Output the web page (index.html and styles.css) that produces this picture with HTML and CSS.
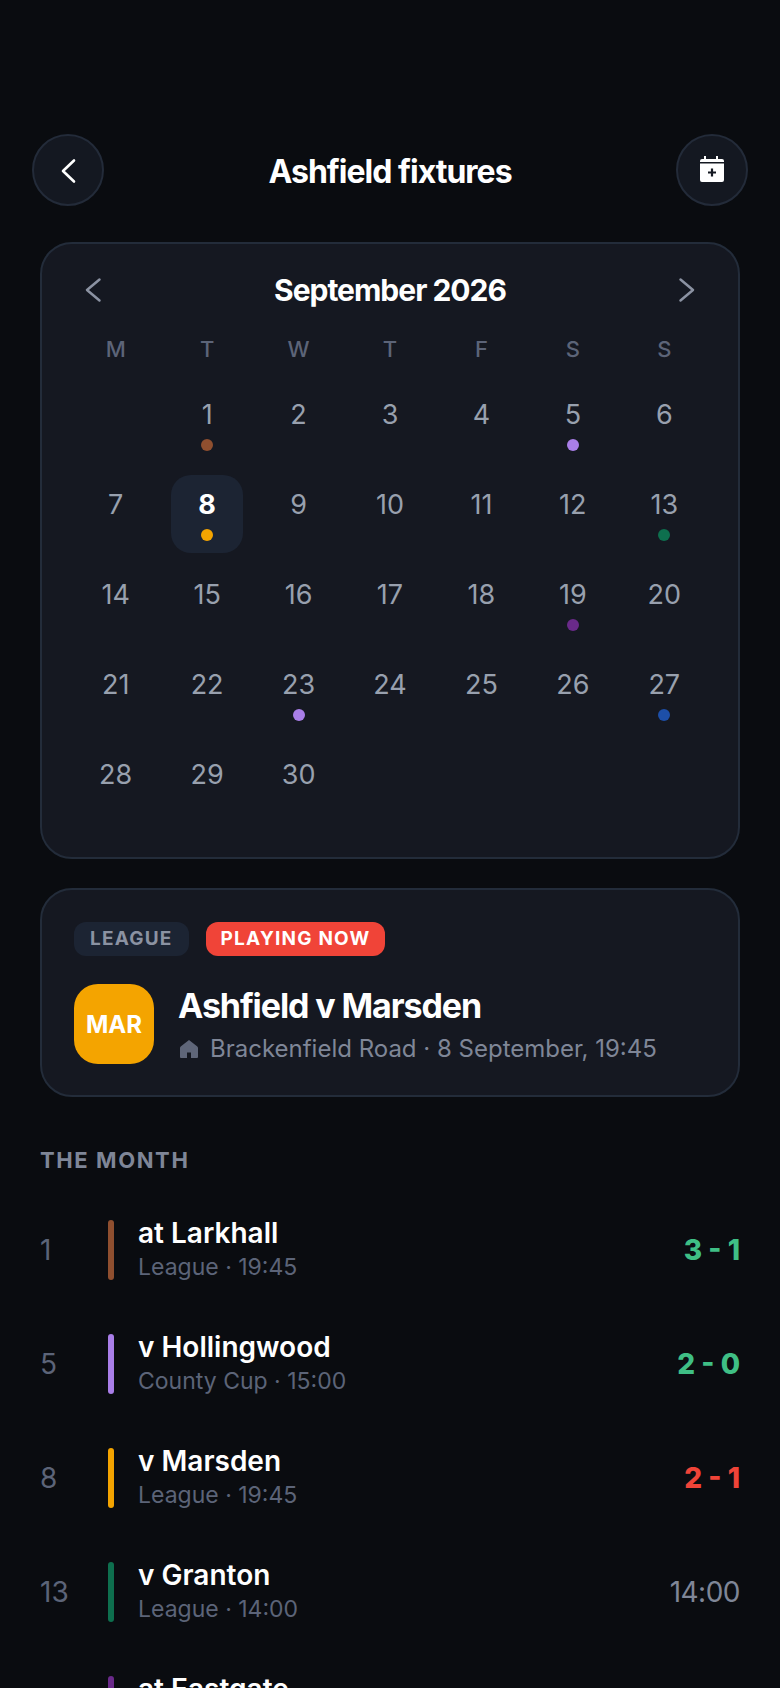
FILE: index.html
```html
<!DOCTYPE html>
<html>
	<head>
		<meta charset="UTF-8">
		<title>Ashfield fixtures</title>
		<link rel="stylesheet" href="styles.css">
	</head>
	<body>
		<div class="page">
			<div class="topbar">
				<div class="round-btn">
					<svg width="36" height="36" viewBox="0 0 36 36"><path d="M24 8.5 L13 19 L24 29.5" fill="none" stroke="#fff" stroke-width="2.6" stroke-linecap="round" stroke-linejoin="round"/></svg>
				</div>
				<h1>Ashfield fixtures</h1>
				<div class="round-btn">
					<svg width="28" height="28" viewBox="0 0 28 28">
						<path fill="#fff" d="M6 0h2v3h10V0h2v3h4a2 2 0 0 1 2 2v19a2 2 0 0 1-2 2H4a2 2 0 0 1-2-2V5a2 2 0 0 1 2-2h2z"/>
						<path fill="none" stroke="#141821" stroke-width="1.5" d="M2 6.75h24"/>
						<path fill="none" stroke="#141821" stroke-width="2.2" d="M10 16.5h8M14 12.5v8"/>
					</svg>
				</div>
			</div>

			<div class="card calendar">
				<div class="cal-head">
					<svg width="28" height="28" viewBox="0 0 28 28"><path d="M21.5 3.5 L9 14 L21.5 24.5" class="nav"/></svg>
					<span>September 2026</span>
					<svg width="28" height="28" viewBox="0 0 28 28"><path d="M6.5 3.5 L19 14 L6.5 24.5" class="nav"/></svg>
				</div>
				<div class="weekdays">
					<span>M</span><span>T</span><span>W</span><span>T</span><span>F</span><span>S</span><span>S</span>
				</div>
				<div class="days">
					<div class="day"></div>
					<div class="day">1<i class="dot brown"></i></div>
					<div class="day">2</div>
					<div class="day">3</div>
					<div class="day">4</div>
					<div class="day">5<i class="dot lilac"></i></div>
					<div class="day">6</div>
					<div class="day">7</div>
					<div class="day today">8<i class="dot amber"></i></div>
					<div class="day">9</div>
					<div class="day">10</div>
					<div class="day">11</div>
					<div class="day">12</div>
					<div class="day">13<i class="dot green"></i></div>
					<div class="day">14</div>
					<div class="day">15</div>
					<div class="day">16</div>
					<div class="day">17</div>
					<div class="day">18</div>
					<div class="day">19<i class="dot purple"></i></div>
					<div class="day">20</div>
					<div class="day">21</div>
					<div class="day">22</div>
					<div class="day">23<i class="dot lilac"></i></div>
					<div class="day">24</div>
					<div class="day">25</div>
					<div class="day">26</div>
					<div class="day">27<i class="dot blue"></i></div>
					<div class="day">28</div>
					<div class="day">29</div>
					<div class="day">30</div>
				</div>
			</div>

			<div class="card match">
				<div class="badges">
					<span class="badge">LEAGUE</span>
					<span class="badge live">PLAYING NOW</span>
				</div>
				<div class="match-info">
					<div class="crest">MAR</div>
					<div>
						<div class="match-title">Ashfield v Marsden</div>
						<div class="match-sub">
							<svg width="22" height="22" viewBox="0 0 22 22"><path fill="#5f6679" d="M11 2 L19.3 8.5 Q20 9 20 10 V19 Q20 20 19 20 H13 V14.5 H9 V20 H3 Q2 20 2 19 V10 Q2 9 2.7 8.5 Z"/></svg>
							Brackenfield Road · 8 September, 19:45
						</div>
					</div>
				</div>
			</div>

			<div class="section-label">THE MONTH</div>

			<div class="fixtures">
				<div class="fixture">
					<span class="num">1</span>
					<i class="bar brown"></i>
					<div class="info"><div class="name">at Larkhall</div><div class="sub">League · 19:45</div></div>
					<span class="score win">3 - 1</span>
				</div>
				<div class="fixture">
					<span class="num">5</span>
					<i class="bar lilac"></i>
					<div class="info"><div class="name">v Hollingwood</div><div class="sub">County Cup · 15:00</div></div>
					<span class="score win">2 - 0</span>
				</div>
				<div class="fixture">
					<span class="num">8</span>
					<i class="bar amber"></i>
					<div class="info"><div class="name">v Marsden</div><div class="sub">League · 19:45</div></div>
					<span class="score loss">2 - 1</span>
				</div>
				<div class="fixture">
					<span class="num">13</span>
					<i class="bar green"></i>
					<div class="info"><div class="name">v Granton</div><div class="sub">League · 14:00</div></div>
					<span class="time">14:00</span>
				</div>
				<!-- last row runs off the bottom of the screen -->
				<div class="fixture">
					<span class="num"></span>
					<i class="bar purple"></i>
					<div class="info"><div class="name">at Eastgate</div><div class="sub"></div></div>
				</div>
			</div>
		</div>
	</body>
</html>
```
FILE: styles.css
```css
*{
	margin: 0;
	padding: 0;
	box-sizing: border-box;
}
html, body{
	height: 1688px;
	overflow: hidden;
}
body{
	background: #0a0c10;
	color: #fff;
	font-family: Inter, "Liberation Sans", sans-serif;
}
.page{
	padding: 134px 40px 0;
}
.topbar{
	display: flex;
	align-items: center;
	justify-content: space-between;
	margin: 0 -8px 36px;
}
.topbar h1{
	font-size: 32px;
	font-weight: 700;
	letter-spacing: -1px;
	padding-top: 2px;
}
.round-btn{
	width: 72px;
	height: 72px;
	border-radius: 50%;
	background: #141821;
	border: 2px solid #232b39;
	display: flex;
	align-items: center;
	justify-content: center;
}
.card{
	background: #151821;
	border: 2px solid #232c3a;
	border-radius: 32px;
}
.calendar{
	height: 617px;
	padding: 0 28px;
	margin-bottom: 29px;
}
.cal-head{
	height: 90px;
	padding: 2px 8px 0;
	display: flex;
	align-items: center;
	justify-content: space-between;
	font-size: 30px;
	font-weight: 700;
	letter-spacing: -1px;
}
.nav{
	fill: none;
	stroke: #8b92a2;
	stroke-width: 2.5;
	stroke-linecap: round;
	stroke-linejoin: round;
}
.weekdays, .days{
	display: grid;
	grid-template-columns: repeat(7, 1fr);
}
.weekdays{
	height: 30px;
	margin-bottom: 21px;
	align-items: center;
	justify-items: center;
	color: #5c6478;
	font-size: 22px;
	font-weight: 500;
}
.days{
	grid-auto-rows: 78px;
	row-gap: 12px;
	justify-items: center;
}
.day{
	position: relative;
	width: 72px;
	height: 78px;
	border-radius: 20px;
	padding-top: 14px;
	text-align: center;
	font-size: 27px;
	line-height: 32px;
	color: #98a0ae;
}
.today{
	background: #1c2433;
	color: #fff;
	font-weight: 700;
}
.dot{
	position: absolute;
	left: 30px;
	top: 54px;
	width: 12px;
	height: 12px;
	border-radius: 50%;
}
.brown{ background: #8f4f2f; }
.lilac{ background: #a97ee8; }
.amber{ background: #f4a400; }
.green{ background: #0e6f4e; }
.purple{ background: #6a2a8a; }
.blue{ background: #1d4fa8; }
.match{
	height: 209px;
	padding: 32px;
	margin-bottom: 50px;
}
.badges{
	display: flex;
	gap: 17px;
	margin-bottom: 28px;
}
.badge{
	height: 34px;
	line-height: 34px;
	padding: 0 16px;
	border-radius: 12px;
	background: #1c2433;
	color: #8b92a2;
	font-size: 19px;
	font-weight: 700;
	letter-spacing: 1.2px;
}
.live{
	padding: 0 15px;
	background: #f04438;
	color: #fff;
}
.match-info{
	display: flex;
	align-items: center;
	gap: 24px;
}
.crest{
	width: 80px;
	height: 80px;
	border-radius: 24px;
	background: #f4a400;
	display: flex;
	align-items: center;
	justify-content: center;
	font-size: 24px;
	font-weight: 700;
}
.match-title{
	font-size: 34px;
	font-weight: 700;
	letter-spacing: -1.1px;
	margin-bottom: 8px;
}
.match-sub{
	display: flex;
	align-items: center;
	gap: 10px;
	font-size: 24px;
	color: #7f8697;
}
.section-label{
	font-size: 22px;
	font-weight: 700;
	letter-spacing: 1.6px;
	color: #7f8697;
	margin-bottom: 47px;
}
.fixture{
	display: flex;
	align-items: center;
	height: 60px;
	margin-bottom: 54px;
}
.num{
	width: 68px;
	font-size: 28px;
	color: #5c6478;
}
.bar{
	width: 6px;
	height: 60px;
	border-radius: 3px;
	margin-right: 24px;
}
.info{
	flex: 1;
}
.name{
	font-size: 28px;
	font-weight: 600;
	line-height: 34px;
}
.sub{
	font-size: 23px;
	line-height: 34px;
	height: 34px;
	color: #5c6478;
}
.score{
	font-size: 28px;
	font-weight: 800;
}
.win{ color: #3fbf85; }
.loss{ color: #ef4438; }
.time{
	font-size: 28px;
	letter-spacing: -0.5px;
	color: #7f8697;
}
```
